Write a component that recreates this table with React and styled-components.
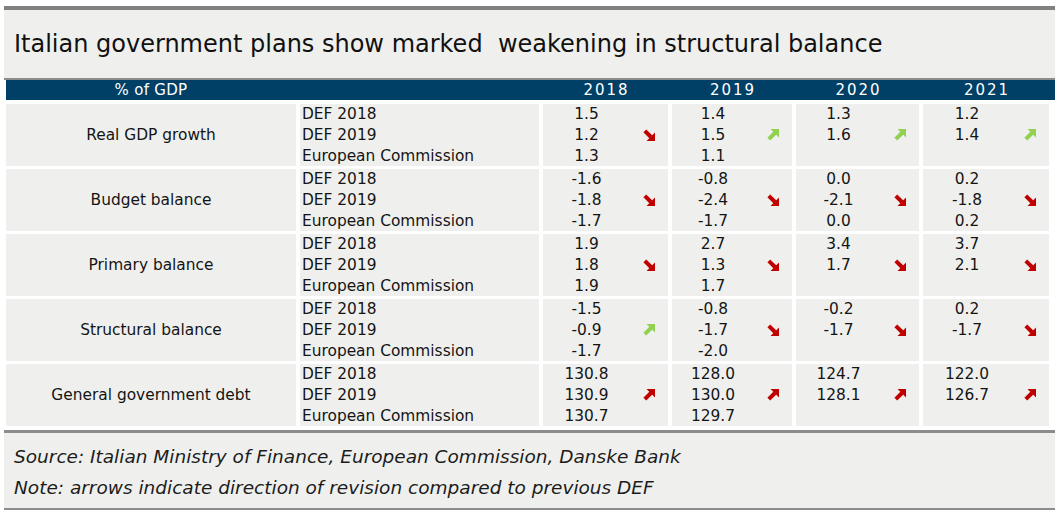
import React from 'react';
import styled, { createGlobalStyle } from 'styled-components';

const GlobalStyle = createGlobalStyle`
  body {
    margin: 0;
    background: #ffffff;
    font-family: "DejaVu Sans", "Liberation Sans", sans-serif;
    color: #141414;
  }
`;

const Panel = styled.div`
  width: 1051px;
  margin: 6px 0 0 4px;
  border-top: 4px solid #808080;
  border-bottom: 2px solid #8c8c8c;
  background: #eff0ee;
`;

const Title = styled.h1`
  margin: 0;
  height: 68px;
  display: flex;
  align-items: center;
  padding: 0 0 0 10px;
  font-size: 24px;
  font-weight: normal;
  white-space: pre;
  color: #111;
`;

const Table = styled.div`
  border-top: 2px solid #8c8c8c;
  background: #ffffff;
  padding: 0 3px 4px 2px;
`;

const columns = '290px 239px 125px 120px 123px 126px';

const HeaderRow = styled.div`
  display: grid;
  grid-template-columns: ${columns};
  column-gap: 4px;
  height: 20px;
  margin-right: -3px;
  background: #003f66;
  color: #ffffff;
  font-size: 15px;
`;

const HeaderCell = styled.div`
  display: flex;
  align-items: center;
  justify-content: center;
  letter-spacing: ${(p) => (p.$year ? '2px' : '0.3px')};
  padding-left: ${(p) => (p.$year ? '2px' : '0')};
`;

const Body = styled.div`
  display: grid;
  row-gap: 3px;
  padding-top: 4px;
`;

const Row = styled.div`
  display: grid;
  grid-template-columns: ${columns};
  column-gap: 4px;
  height: 62px;
`;

const LabelCell = styled.div`
  background: #eff0ee;
  display: flex;
  align-items: center;
  justify-content: center;
  font-size: 15.4px;
`;

const Stack = styled.div`
  background: #eff0ee;
  display: grid;
  grid-template-rows: repeat(3, 1fr);
`;

const Line = styled.div`
  display: flex;
  align-items: center;
  padding-left: 2px;
  font-size: 15.4px;
`;

const YearCell = styled.div`
  background: #eff0ee;
  display: grid;
  grid-template-columns: 1fr 38px;
  grid-template-rows: repeat(3, 1fr);
`;

const Value = styled.div`
  display: flex;
  align-items: center;
  justify-content: center;
  grid-column: 1;
  font-size: 15.4px;
`;

const ArrowSlot = styled.div`
  display: flex;
  align-items: center;
  padding-left: 13px;
  grid-row: 2;
  grid-column: 2;
`;

const Footer = styled.div`
  border-top: 3px solid #8c8c8c;
  height: 78px;
  padding: 8px 0 0 10px;
  box-sizing: border-box;
  font-size: 18.5px;
  font-style: italic;
  line-height: 31px;
  color: #1c1c1c;
`;

const RED = '#c00000';
const GREEN = '#92d050';

const Arrow = ({ dir, color }) => (
  <svg width="12" height="12" viewBox="0 0 12 12">
    {dir === 'down' ? (
      <g fill={color} stroke={color}>
        <line x1="1.8" y1="1.8" x2="8" y2="8" strokeWidth="4" />
        <polygon points="12,3.5 12,12 3.5,12" stroke="none" />
      </g>
    ) : (
      <g fill={color} stroke={color}>
        <line x1="1.8" y1="10.2" x2="8" y2="4" strokeWidth="4" />
        <polygon points="3.5,0 12,0 12,8.5" stroke="none" />
      </g>
    )}
  </svg>
);

const arrows = {
  down: { dir: 'down', color: RED },
  upGood: { dir: 'up', color: GREEN },
  upBad: { dir: 'up', color: RED },
};

const sources = ['DEF 2018', 'DEF 2019', 'European Commission'];

const rows = [
  {
    label: 'Real GDP growth',
    years: [
      { v: ['1.5', '1.2', '1.3'], a: 'down' },
      { v: ['1.4', '1.5', '1.1'], a: 'upGood' },
      { v: ['1.3', '1.6', ''], a: 'upGood' },
      { v: ['1.2', '1.4', ''], a: 'upGood' },
    ],
  },
  {
    label: 'Budget balance',
    years: [
      { v: ['-1.6', '-1.8', '-1.7'], a: 'down' },
      { v: ['-0.8', '-2.4', '-1.7'], a: 'down' },
      { v: ['0.0', '-2.1', '0.0'], a: 'down' },
      { v: ['0.2', '-1.8', '0.2'], a: 'down' },
    ],
  },
  {
    label: 'Primary balance',
    years: [
      { v: ['1.9', '1.8', '1.9'], a: 'down' },
      { v: ['2.7', '1.3', '1.7'], a: 'down' },
      { v: ['3.4', '1.7', ''], a: 'down' },
      { v: ['3.7', '2.1', ''], a: 'down' },
    ],
  },
  {
    label: 'Structural balance',
    years: [
      { v: ['-1.5', '-0.9', '-1.7'], a: 'upGood' },
      { v: ['-0.8', '-1.7', '-2.0'], a: 'down' },
      { v: ['-0.2', '-1.7', ''], a: 'down' },
      { v: ['0.2', '-1.7', ''], a: 'down' },
    ],
  },
  {
    label: 'General government debt',
    years: [
      { v: ['130.8', '130.9', '130.7'], a: 'upBad' },
      { v: ['128.0', '130.0', '129.7'], a: 'upBad' },
      { v: ['124.7', '128.1', ''], a: 'upBad' },
      { v: ['122.0', '126.7', ''], a: 'upBad' },
    ],
  },
];

const App = () => (
  <>
    <GlobalStyle />
    <Panel>
      <Title>{'Italian government plans show marked  weakening in structural balance'}</Title>
      <Table>
        <HeaderRow>
          <HeaderCell>% of GDP</HeaderCell>
          <HeaderCell />
          {['2018', '2019', '2020', '2021'].map((y) => (
            <HeaderCell $year key={y}>{y}</HeaderCell>
          ))}
        </HeaderRow>
        <Body>
          {rows.map((row) => (
            <Row key={row.label}>
              <LabelCell>{row.label}</LabelCell>
              <Stack>
                {sources.map((s) => (
                  <Line key={s}>{s}</Line>
                ))}
              </Stack>
              {row.years.map((year, i) => (
                <YearCell key={i}>
                  {year.v.map((val, j) => (
                    <Value key={j} style={{ gridRow: j + 1 }}>{val}</Value>
                  ))}
                  <ArrowSlot>
                    <Arrow {...arrows[year.a]} />
                  </ArrowSlot>
                </YearCell>
              ))}
            </Row>
          ))}
        </Body>
      </Table>
      <Footer>
        <div>Source: Italian Ministry of Finance, European Commission, Danske Bank</div>
        <div>Note: arrows indicate direction of revision compared to previous DEF</div>
      </Footer>
    </Panel>
  </>
);

export default App;
